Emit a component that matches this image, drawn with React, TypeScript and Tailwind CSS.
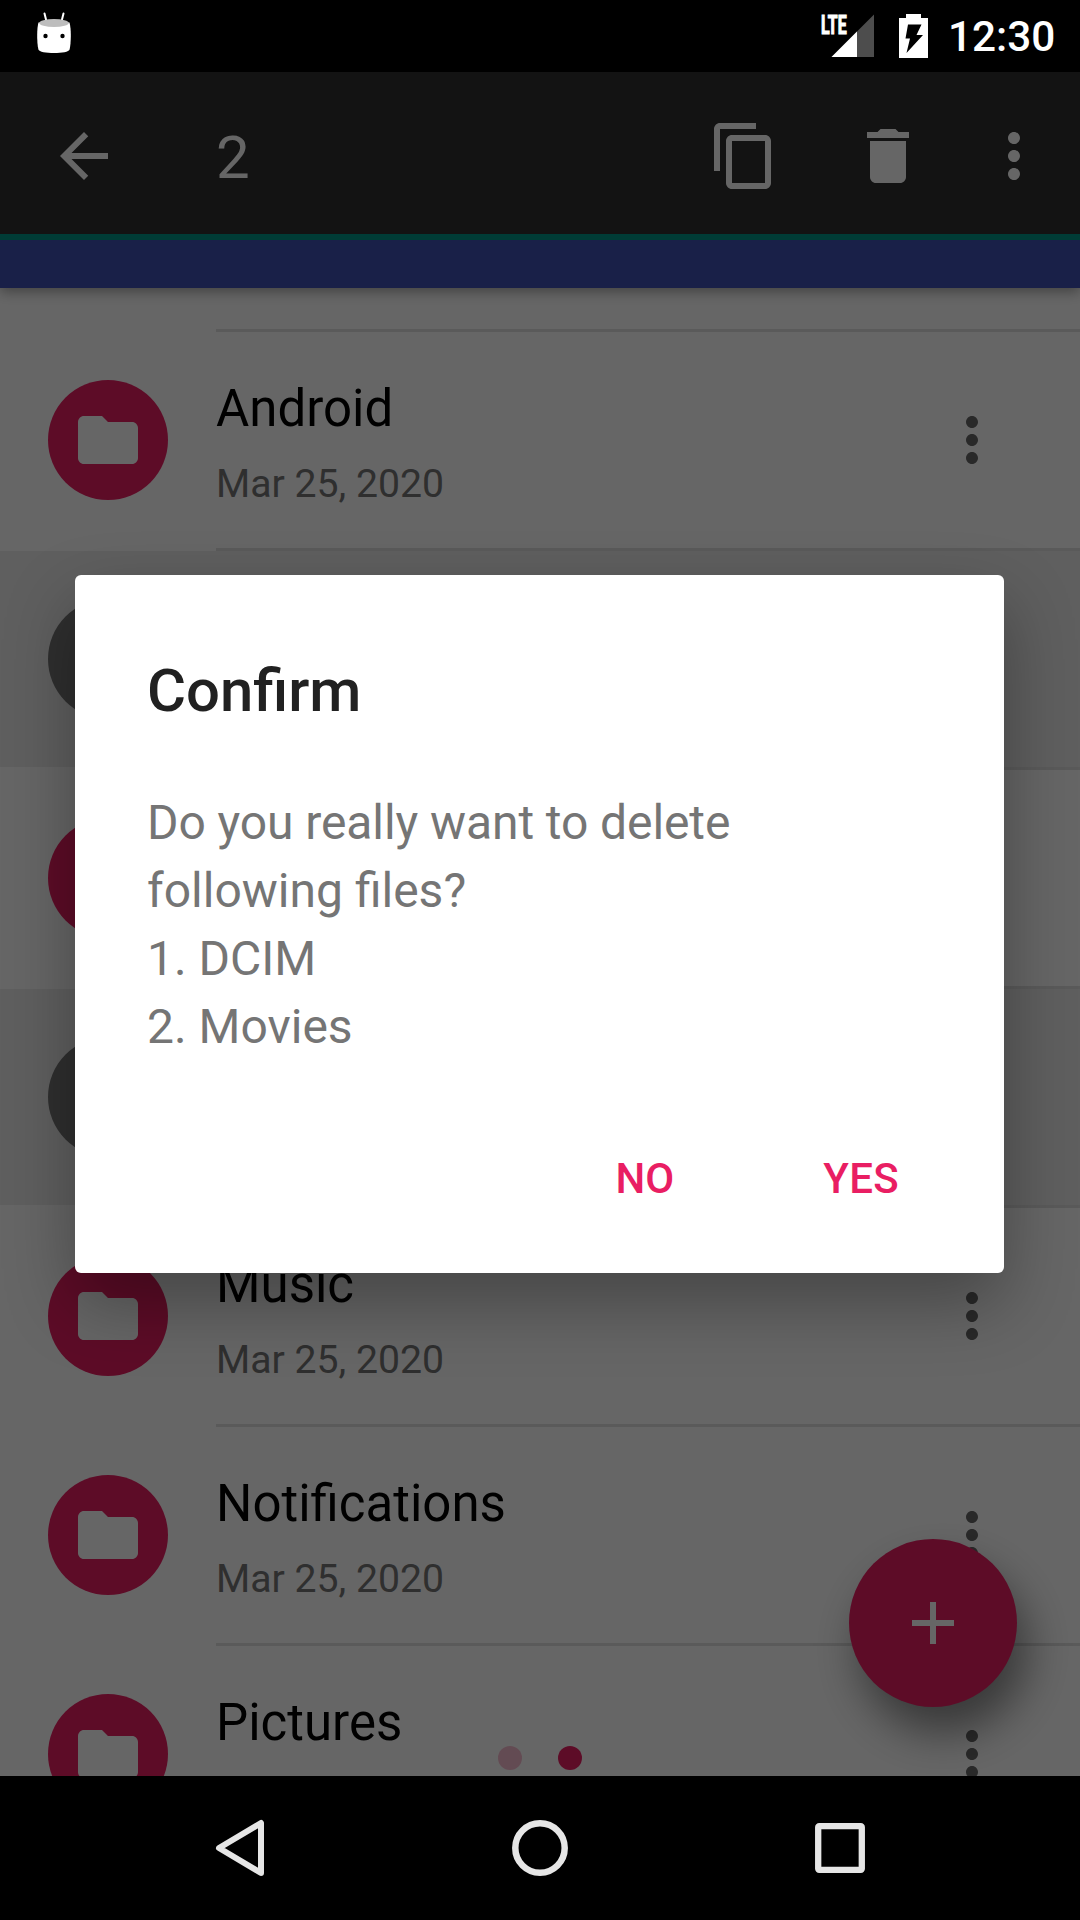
import React from "react";

type IconProps = { d: string; className?: string };

const Icon = ({ d, className = "" }: IconProps) => (
  <svg viewBox="0 0 24 24" className={`block size-[72px] shrink-0 fill-current ${className}`}>
    <path d={d} />
  </svg>
);

const BACK = "M20 11H7.83l5.59-5.59L12 4l-8 8 8 8 1.41-1.41L7.83 13H20v-2z";
const COPY =
  "M16 1H4c-1.1 0-2 .9-2 2v14h2V3h12V1zm3 4H8c-1.1 0-2 .9-2 2v14c0 1.1.9 2 2 2h11c1.1 0 2-.9 2-2V7c0-1.1-.9-2-2-2zm0 16H8V7h11v14z";
const TRASH = "M6 19c0 1.1.9 2 2 2h8c1.1 0 2-.9 2-2V7H6v12zM19 4h-3.5l-1-1h-5l-1 1H5v2h14V4z";
const MORE =
  "M12 8c1.1 0 2-.9 2-2s-.9-2-2-2-2 .9-2 2 .9 2 2 2zm0 2c-1.1 0-2 .9-2 2s.9 2 2 2 2-.9 2-2-.9-2-2-2zm0 6c-1.1 0-2 .9-2 2s.9 2 2 2 2-.9 2-2-.9-2-2-2z";
const FOLDER = "M10 4H4c-1.1 0-1.99.9-1.99 2L2 18c0 1.1.9 2 2 2h16c1.1 0 2-.9 2-2V8c0-1.1-.9-2-2-2h-8l-2-2z";
const ADD = "M19 13h-6v6h-2v-6H5v-2h6V5h2v6h6v2z";

type FileRow = { id: number; name?: string; date?: string; selected?: boolean };

const files: FileRow[] = [
  { id: 1, name: "Android", date: "Mar 25, 2020" },
  { id: 2, selected: true },
  { id: 3 },
  { id: 4, selected: true },
  { id: 5, name: "Music", date: "Mar 25, 2020" },
  { id: 6, name: "Notifications", date: "Mar 25, 2020" },
  { id: 7, name: "Pictures" },
];

const StatusBar = () => (
  <div className="flex h-[72px] shrink-0 items-start bg-black text-white">
    <svg viewBox="0 0 36 44" className="ml-9 mt-[11px] h-11 w-9">
      <path d="M8.500 2.500l2 8M27.500 2.500l-2 8" stroke="#fff" strokeWidth="2" strokeLinecap="round" />
      <path
        d="M2.500 11.500C.800 17 .700 31 2.400 38.500c.6 2.500 7.800 3.500 15.600 3.500s15-1 15.600-3.500c1.700-7.500 1.600-21.500-.1-27z"
        fill="#fff"
      />
      <ellipse cx="18" cy="12" rx="14.800" ry="4" fill="#bdbdbd" />
      <circle cx="9.500" cy="25" r="2.200" fill="#000" />
      <circle cx="26.500" cy="25" r="2.200" fill="#000" />
    </svg>
    <div className="ml-auto mt-[13px] w-[27px]">
      <span className="block origin-left scale-x-[0.61] text-[26px]/[24px] font-bold [-webkit-text-stroke:1.2px_white]">
        LTE
      </span>
    </div>
    <svg viewBox="0 0 43 43" className="-ml-[17px] mt-3.5 size-[43px]">
      <path d="M43 .5V43H.5z" fill="#4d4d4d" />
      <path d="M26 17.500V43H.5z" fill="#fff" />
    </svg>
    <svg viewBox="0 0 29 44" className="ml-[25px] mt-3.5 h-11 w-[29px]">
      <path d="M7 0h15v4h7v40H0V4h7z" fill="#fff" />
      <path d="M9 10.500h13.500l-5 10.500H24L7.500 39l3.500-14.500H6.500z" fill="#000" />
    </svg>
    <span className="ml-5 mr-6 mt-3 w-[108px] whitespace-nowrap text-[42.3px]/[50px] font-medium">12:30</span>
  </div>
);

const Row = ({ name, date, selected }: FileRow) => (
  <div className="shrink-0">
    <div className={`flex h-[216px] items-start pl-12 pr-[72px] ${selected ? "bg-[#eeeeee]" : "bg-white"}`}>
      <div
        className={`mt-12 flex size-[120px] shrink-0 items-center justify-center rounded-full text-white ${
          selected ? "bg-[#757575]" : "bg-[#e91e63]"
        }`}
      >
        <Icon d={FOLDER} />
      </div>
      <div className="ml-12 flex-1 pt-[47px]">
        {name && <div className="text-[51px]/[60px] text-black">{name}</div>}
        {date && <div className="mt-[21px] text-[39.2px]/[48px] text-[#757575]">{date}</div>}
      </div>
      <Icon d={MORE} className="mt-[72px] text-[#686868]" />
    </div>
    <div className="ml-[216px] h-[3px] bg-[#e0e0e0]" />
  </div>
);

const Screen = () => (
  <div className="relative flex h-[1704px] flex-col overflow-hidden bg-white">
    <header className="relative shrink-0 shadow-[0_4px_12px_rgba(0,0,0,0.35)]">
      <div className="flex h-[162px] items-center bg-[#303030] pl-12 pr-[30px] pt-1.5 text-white">
        <Icon d={BACK} />
        <span className="ml-24 mt-1 text-[60px]/[72px]">2</span>
        <Icon d={COPY} className="ml-auto" />
        <Icon d={TRASH} className="ml-[72px]" />
        <Icon d={MORE} className="ml-[54px]" />
      </div>
      <div className="h-1.5 bg-[#009688]" />
      <div className="h-12 bg-[#3f51b5]" />
    </header>
    <div className="ml-[216px] mt-[41px] h-[3px] shrink-0 bg-[#e0e0e0]" />
    {files.map((f) => (
      <Row key={f.id} {...f} />
    ))}
    <div className="absolute bottom-1.5 left-0 flex w-full justify-center gap-9">
      <span className="size-6 rounded-full bg-[#e91e63]/30" />
      <span className="size-6 rounded-full bg-[#e91e63]" />
    </div>
    <button className="absolute bottom-[69px] right-[63px] flex size-[168px] items-center justify-center rounded-full bg-[#e91e63] text-white shadow-[10px_26px_44px_rgba(0,0,0,0.45)]">
      <Icon d={ADD} />
    </button>
  </div>
);

const Dialog = () => (
  <div className="absolute inset-x-0 top-[72px] flex h-[1704px] items-center justify-center bg-black/60">
    <div className="mr-px flex h-[698px] w-[929px] flex-col rounded-md bg-white shadow-[0_30px_70px_rgba(0,0,0,0.32)]">
      <h1 className="px-[72px] pt-[76px] text-[59.8px]/[80px] font-medium text-[#212121]">Confirm</h1>
      <p className="mt-[58px] whitespace-pre-line px-[72px] text-[48px]/[68px] text-[#757575]">
        <span className="tracking-[-0.09px]">Do you really want to delete</span>
        {"\nfollowing files?\n1. DCIM\n2. Movies"}
      </p>
      <div className="mt-[93px] flex justify-end pr-[105px] text-[42px]/[50px] font-medium text-[#e91e63]">
        <button>NO</button>
        <button className="ml-[149px] tracking-[0.3px]">YES</button>
      </div>
    </div>
  </div>
);

const NavBar = () => (
  <div className="flex h-36 items-center justify-center gap-[228px] bg-black">
    <svg viewBox="0 0 72 72" className="size-[72px]" fill="none" stroke="#e6e6e6" strokeWidth="6" strokeLinejoin="round">
      <path d="M57 11v50L15 36z" />
    </svg>
    <svg viewBox="0 0 72 72" className="size-[72px]" fill="none" stroke="#e6e6e6" strokeWidth="6.500">
      <circle cx="36" cy="36" r="24.700" />
    </svg>
    <svg viewBox="0 0 72 72" className="size-[72px]" fill="none" stroke="#e6e6e6" strokeWidth="6.300" strokeLinejoin="round">
      <rect x="14.200" y="14.200" width="43.600" height="43.600" rx="1" />
    </svg>
  </div>
);

export default function App() {
  return (
    <div className="relative h-[1920px] w-[1080px] overflow-hidden bg-black font-['Roboto',sans-serif]">
      <StatusBar />
      <Screen />
      <NavBar />
      <Dialog />
    </div>
  );
}
